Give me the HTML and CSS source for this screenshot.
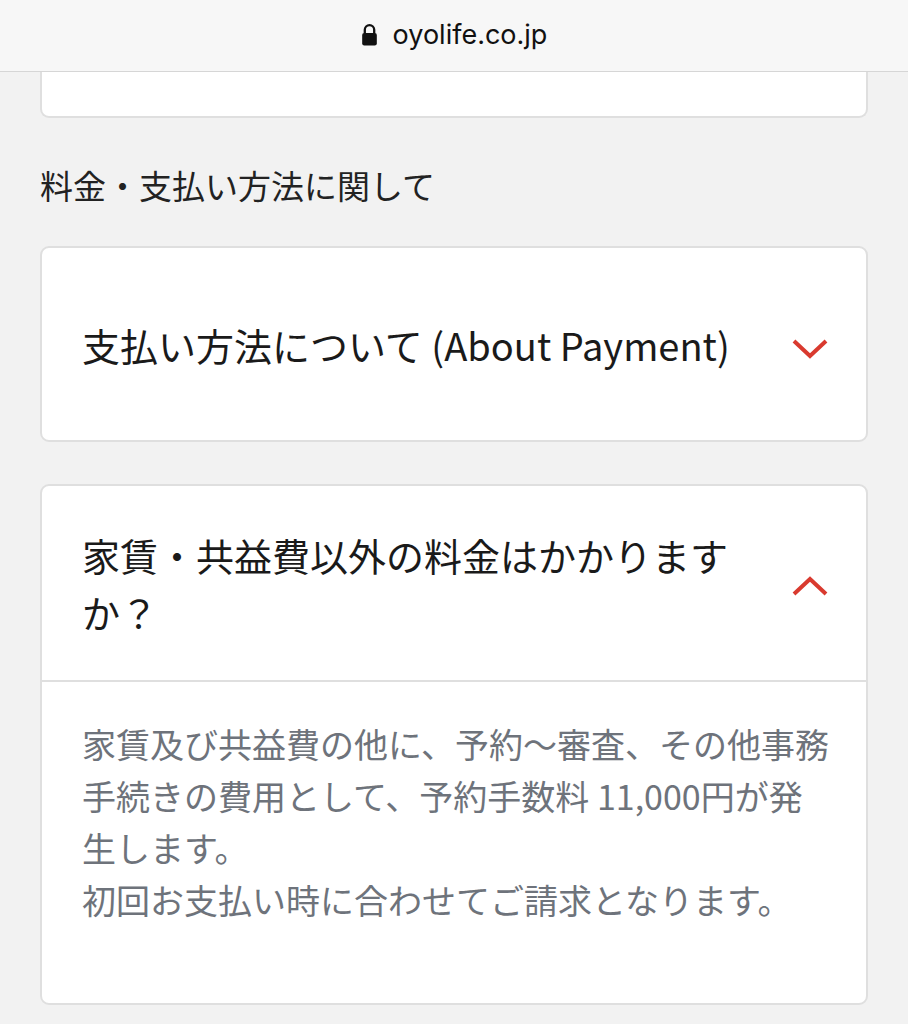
FILE: index.html
```html
<!DOCTYPE html>
<html lang="ja">
<head>
  <meta charset="UTF-8" />
  <meta name="viewport" content="width=device-width, initial-scale=1.0" />
  <title>よくある質問 | OYO LIFE</title>
  <link rel="stylesheet" href="styles.css">
</head>
<body>
  <!-- ブラウザのアドレスバー -->
  <div class="url-bar">
    <svg class="lock" width="17" height="23" viewBox="0 0 16 22">
      <path d="M3.5 10 V6.5 a4.5 4.5 0 0 1 9 0 V10" fill="none" stroke="#111" stroke-width="2.2"/>
      <rect x="1" y="9.5" width="14" height="12" rx="2" fill="#111"/>
    </svg>
    <span class="url-text">oyolife.co.jp</span>
  </div>

  <div class="main">
    <!-- 前のカードの末尾 -->
    <div class="card card-tail"></div>

    <h2 class="section-title">料金・支払い方法に関して</h2>

    <div class="card">
      <div class="faq-head">
        <p class="faq-q">支払い方法について (About Payment)</p>
        <svg class="chevron" width="36" height="20" viewBox="0 0 36 20">
          <polyline points="2,2 18,17 34,2" fill="none" stroke="#d93a2f" stroke-width="4"/>
        </svg>
      </div>
    </div>

    <div class="card open">
      <div class="faq-head">
        <p class="faq-q">家賃・共益費以外の料金はかかりますか？</p>
        <svg class="chevron" width="36" height="20" viewBox="0 0 36 20">
          <polyline points="2,18 18,3 34,18" fill="none" stroke="#d93a2f" stroke-width="4"/>
        </svg>
      </div>
      <div class="faq-a">
        家賃及び共益費の他に、予約〜審査、その他事務手続きの費用として、予約手数料 11,000円が発生します。<br>
        初回お支払い時に合わせてご請求となります。
      </div>
    </div>
  </div>
</body>
</html>
```

FILE: styles.css
```css
body {
  margin: 0;
  padding: 0;
  background-color: #f2f2f2;
  font-family: 'Noto Sans CJK JP', 'Noto Sans', sans-serif;
  color: #1a1a1a;
}
.url-bar {
  height: 72px;
  box-sizing: border-box;
  border-bottom: 1px solid #d6d6d6;
  background-color: #f7f7f7;
  display: flex;
  align-items: center;
  justify-content: center;
  gap: 15px;
}
.lock {
  margin-top: -2px;
}
.url-text {
  font-family: Inter, 'Liberation Sans', sans-serif;
  font-size: 27px;
  color: #111;
  margin-top: -2px;
}
.main {
  padding: 0 40px;
}
.card {
  background-color: #fff;
  border: 2px solid #dfdfdf;
  border-radius: 9px;
  margin-bottom: 42px;
}
.card-tail {
  height: 44px;
  border-top: none;
  border-top-left-radius: 0;
  border-top-right-radius: 0;
  margin-bottom: 0;
}
.section-title {
  margin: 42px 0 36px;
  font-size: 33px;
  font-weight: normal;
  line-height: 50px;
  color: #222;
}
.faq-head {
  min-height: 192px;
  display: flex;
  align-items: center;
  gap: 40px;
  padding: 0 38px 0 40px;
}
.faq-q {
  flex: 1;
  margin: 0;
  font-size: 38px;
  line-height: 57px;
}
.chevron {
  flex-shrink: 0;
  margin-top: 10px;
}
.open .faq-head {
  min-height: 194px;
  border-bottom: 2px solid #dfdfdf;
}
.open .chevron {
  margin-top: 6px;
}
.faq-a {
  padding: 36px 30px 77px 40px;
  font-size: 34px;
  line-height: 52px;
  color: #6e737b;
}
```
